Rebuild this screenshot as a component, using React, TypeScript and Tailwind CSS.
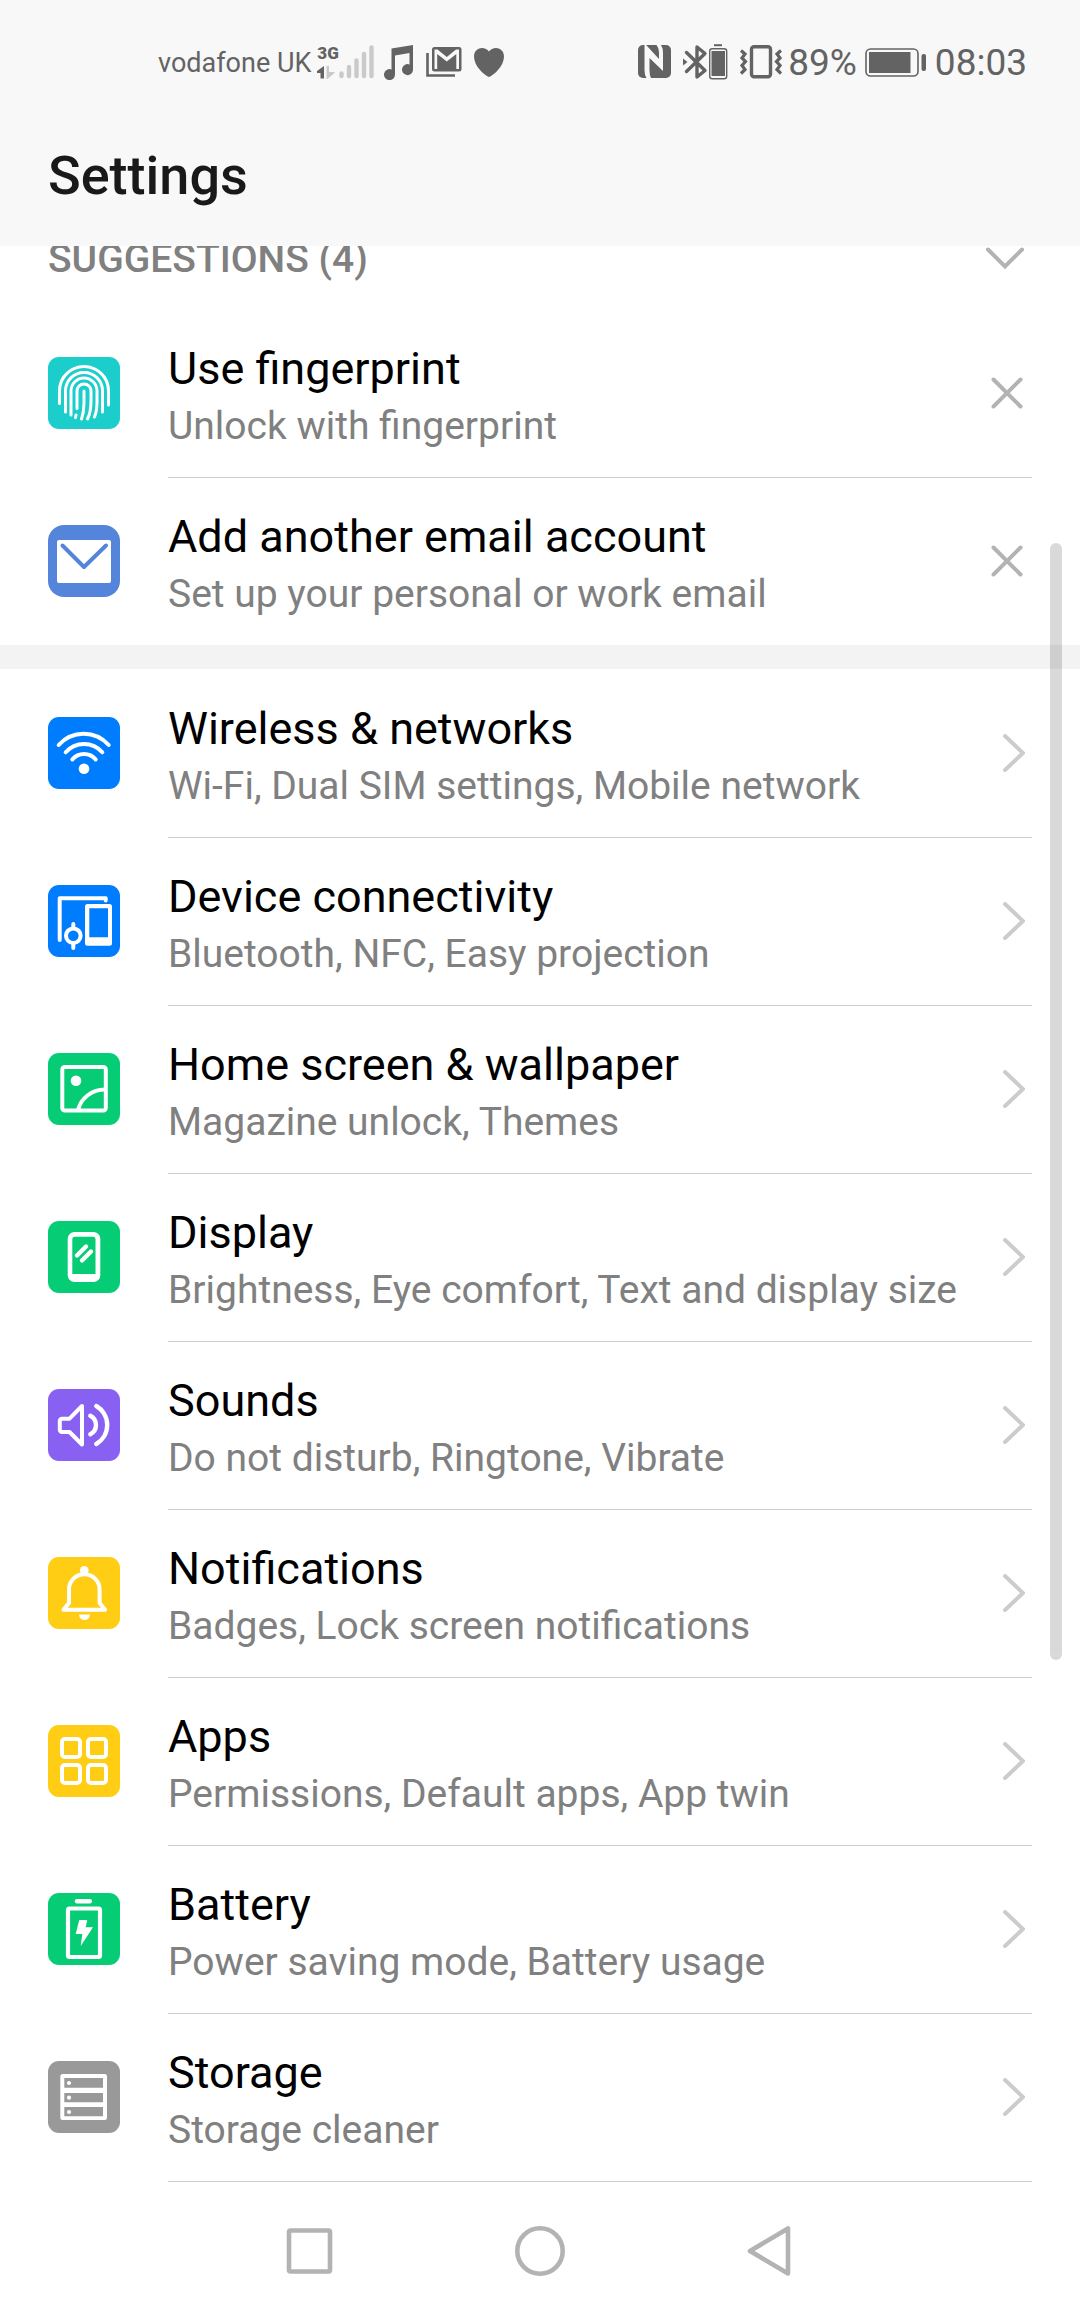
import type { ReactNode } from "react";

type SettingItem = {
  title: string;
  summary: string;
  color: string;
  icon: ReactNode;
};

type SettingRowProps = {
  item: SettingItem;
  first?: boolean;
  dismissible?: boolean;
};

const suggestions: SettingItem[] = [
  {
    title: "Use fingerprint",
    summary: "Unlock with fingerprint",
    color: "bg-[#1bcdcb] rounded-[11px]",
    icon: (
      <g strokeWidth="3">
        <path d="M11.5 46.5V34a24.5 24.5 0 0 1 49 0v14" />
        <path d="M17.5 55V34a18.5 18.5 0 0 1 37 0v21" />
        <path d="M23 58V34a13 13 0 0 1 26 0v11q0 9-2.5 15" />
        <path d="M29 51.5V34a7 7 0 0 1 14 0v10q0 11-3.5 18" />
        <path d="M36 34v12q0 9-2.5 16M28 58l-.5 2.5" />
      </g>
    ),
  },
  {
    title: "Add another email account",
    summary: "Set up your personal or work email",
    color: "bg-[#5585da] rounded-[16px]",
    icon: (
      <>
        <rect x="9" y="15" width="54" height="43" rx="2" fill="#fff" stroke="none" />
        <path d="M14.5 20.5 36 42l22-21.5" stroke="#5585da" strokeWidth="4" />
      </>
    ),
  },
];

const settings: SettingItem[] = [
  {
    title: "Wireless & networks",
    summary: "Wi-Fi, Dual SIM settings, Mobile network",
    color: "bg-[#007dff] rounded-[11px]",
    icon: (
      <>
        <path d="M10.7 28a33.3 33.3 0 0 1 50 0M17.7 35.3a24.3 24.3 0 0 1 36.6 0M24.3 42.5a15 15 0 0 1 23.4 0" />
        <circle cx="36" cy="51.7" r="5.3" fill="#fff" stroke="none" />
      </>
    ),
  },
  {
    title: "Device connectivity",
    summary: "Bluetooth, NFC, Easy projection",
    color: "bg-[#007dff] rounded-[11px]",
    icon: (
      <>
        <path d="M11.7 55V13.3h46v2.2" />
        <path
          d="M39.5 19h22a2.5 2.5 0 0 1 2.5 2.500v36.700a2.5 2.5 0 0 1-2.5 2.500h-22a2.5 2.5 0 0 1-2.5-2.500V21.500a2.5 2.5 0 0 1 2.5-2.500Zm1.800 4.300v29h18.700v-29Z"
          fill="#fff"
          fillRule="evenodd"
          stroke="none"
        />
        <circle cx="25.3" cy="50.7" r="7.3" />
        <path d="M25.3 39v4M25.3 59v4" />
      </>
    ),
  },
  {
    title: "Home screen & wallpaper",
    summary: "Magazine unlock, Themes",
    color: "bg-[#07cc76] rounded-[11px]",
    icon: (
      <>
        <rect x="14.3" y="14" width="43.5" height="43.5" rx="2.5" />
        <circle cx="28" cy="27.7" r="5.3" fill="#fff" stroke="none" />
        <path d="M30 57C33 45 44 36.5 57 36.5" />
      </>
    ),
  },
  {
    title: "Display",
    summary: "Brightness, Eye comfort, Text and display size",
    color: "bg-[#07cc76] rounded-[11px]",
    icon: (
      <>
        <path
          d="M26.5 11h19a6.8 6.8 0 0 1 6.8 6.800v36.400a6.8 6.8 0 0 1-6.8 6.800h-19a6.8 6.8 0 0 1-6.8-6.800V17.800a6.8 6.8 0 0 1 6.8-6.800Zm.3 4.700a2.5 2.5 0 0 0-2.5 2.500V53h23.200V18.200a2.5 2.5 0 0 0-2.5-2.500Z"
          fill="#fff"
          fillRule="evenodd"
          stroke="none"
        />
        <path d="m29 34.5 9-9M34 39.5l9-9" strokeWidth="4.4" />
      </>
    ),
  },
  {
    title: "Sounds",
    summary: "Do not disturb, Ringtone, Vibrate",
    color: "bg-[#8861f3] rounded-[11px]",
    icon: (
      <>
        <path d="M14 29.7h7.5L34 17v38.5L21.5 43H14a2.2 2.2 0 0 1-2.2-2.2v-8.900a2.2 2.2 0 0 1 2.2-2.200Z" />
        <path d="M42.3 26.8a10.3 10.3 0 0 1 0 18.4M48.3 17a22 22 0 0 1 0 38" strokeWidth="4.4" />
      </>
    ),
  },
  {
    title: "Notifications",
    summary: "Badges, Lock screen notifications",
    color: "bg-[#ffcd14] rounded-[11px]",
    icon: (
      <>
        <path d="M15.5 52.8 21 46V32.5a15.3 15.3 0 0 1 30.6 0V46l5.5 6.8Z" />
        <circle cx="36.3" cy="13.3" r="4.3" fill="#fff" stroke="none" />
        <path d="M31 57.5h11a5.5 5.5 0 0 1-11 0Z" fill="#fff" stroke="none" />
      </>
    ),
  },
  {
    title: "Apps",
    summary: "Permissions, Default apps, App twin",
    color: "bg-[#ffcd14] rounded-[11px]",
    icon: (
      <>
        <rect x="14" y="14" width="18" height="18" rx="3" />
        <rect x="40" y="14" width="18" height="18" rx="3" />
        <rect x="14" y="40" width="18" height="18" rx="3" />
        <rect x="40" y="40" width="18" height="18" rx="3" />
      </>
    ),
  },
  {
    title: "Battery",
    summary: "Power saving mode, Battery usage",
    color: "bg-[#07cc76] rounded-[11px]",
    icon: (
      <>
        <rect x="20" y="15.5" width="32" height="48.5" rx="1.5" strokeWidth="4.2" />
        <path d="M29 8.2h12.8" strokeWidth="4.4" />
        <path d="M31.3 27h8l-1.600 7.200h7.300L32.7 53l1.600-12h-6.600Z" fill="#fff" stroke="none" />
      </>
    ),
  },
  {
    title: "Storage",
    summary: "Storage cleaner",
    color: "bg-[#999999] rounded-[11px]",
    icon: (
      <>
        <path
          d="M14.8 13h41.700a2.5 2.5 0 0 1 2.5 2.500v41a2.5 2.5 0 0 1-2.5 2.500H14.8a2.5 2.5 0 0 1-2.5-2.500v-41a2.5 2.5 0 0 1 2.5-2.500Zm1.500 4v9.700H55V17Zm0 15v9.300H55V32Zm0 14v9.300H55V46Z"
          fill="#fff"
          fillRule="evenodd"
          stroke="none"
        />
        <g fill="#fff" stroke="none">
          <circle cx="21" cy="22" r="2.1" />
          <circle cx="21" cy="36.7" r="2.1" />
          <circle cx="21" cy="51" r="2.1" />
        </g>
      </>
    ),
  },
];

function SettingRow({ item, first, dismissible }: SettingRowProps) {
  const border = first ? "border-transparent" : "border-[#cccccc]";

  return (
    <li className="flex items-center gap-12 px-12">
      <svg
        viewBox="0 0 72 72"
        fill="none"
        stroke="#fff"
        strokeWidth="4"
        strokeLinecap="round"
        strokeLinejoin="round"
        aria-hidden="true"
        className={`size-[72px] shrink-0 ${item.color}`}
      >
        {item.icon}
      </svg>

      <div className={`flex flex-1 items-center justify-between border-t pr-[7px] ${border}`}>
        <a href="#" className="block flex-1 pt-[31px] pb-[22px] whitespace-nowrap">
          <p className="text-[45px] leading-[56px] text-black">{item.title}</p>
          <p className="text-[39px] leading-[58px] text-[#808080]">{item.summary}</p>
        </a>

        {dismissible ? (
          <button type="button" aria-label={`Dismiss ${item.title}`}>
            <svg width="34" height="34" viewBox="0 0 34 34" stroke="#b3b3b3" strokeWidth="4" strokeLinecap="round">
              <path d="m2.5 2.5 27 27M29.5 2.5l-27 27" />
            </svg>
          </button>
        ) : (
          <svg width="24" height="40" viewBox="0 0 24 40" fill="none" stroke="#cccccc" strokeWidth="4" strokeLinecap="round">
            <path d="m4 2 18 17L4 36" />
          </svg>
        )}
      </div>
    </li>
  );
}

function StatusBar() {
  return (
    <div className="flex h-[124px] items-center justify-between pr-[53px] pl-[158px] text-[#636363]">
      <div className="flex items-center">
        <span className="pt-[2px] text-[27px] leading-9">vodafone UK</span>

        <div className="ml-[6px] flex h-9 flex-col justify-between">
          <span className="pt-px text-[17px] leading-[17px] font-black">3G</span>
          <svg width="20" height="14" viewBox="0 0 20 14">
            <path d="M7 0v12.500H3.500V7H0V5Z" fill="#636363" />
            <path d="M9.500 0H12v6h5.500v1L10.500 13h-1Z" fill="#cacaca" />
          </svg>
        </div>
        <svg width="36" height="36" viewBox="0 0 36 36" stroke="#cacaca" strokeWidth="4.4" strokeLinecap="round">
          <path d="M2.5 29.5V32M10 23v9M17.5 16.5V32M25 10v22M32.5 3.500V32" />
        </svg>

        <svg width="32" height="36" viewBox="0 0 32 36" className="ml-2" fill="#636363">
          <path d="M8.500 4.500 30 1v24.500a5.500 5.500 0 1 1-3.500-5V9L12 11.500v19a5.500 5.500 0 1 1-3.500-5Z" />
        </svg>
        <svg width="36" height="36" viewBox="0 0 36 36" className="ml-[11px]">
          <path d="M1.500 9v22.500H29" fill="none" stroke="#636363" strokeWidth="2.6" />
          <rect x="6" y="3" width="29.500" height="24.500" rx="2.500" fill="#636363" />
          <path d="M8.500 5.500h3l9.300 7.500L30 5.500h3v19.500h-2.700V10L20.800 17.500 11.200 10v15H8.500Z" fill="#f8f8f8" />
        </svg>
        <svg width="32" height="36" viewBox="0 0 32 36" className="ml-[11px]" fill="#636363">
          <path d="M16 33C11 31 1 22 1 12.500 1 3 12 1.500 16 7.500 20 1.500 31 3 31 12.500 31 22 21 31 16 33Z" />
        </svg>
      </div>

      <div className="flex items-center">
        <svg width="33" height="36" viewBox="0 0 33 36">
          <rect y="1" width="33" height="33" rx="5" fill="#636363" />
          <path
            d="M6.500 1C9 1 8 1 9.500 2.500L21 15V8q0-4-2.500-7H23q2 3 2 8v18L11.500 14v12q0 5 1.500 8H8.500q-2-3-2-8Z"
            fill="#f8f8f8"
          />
        </svg>
        <svg width="45" height="36" viewBox="0 0 45 36" className="ml-3">
          <path
            d="m3.500 8.500 18.500 18-8 6.500V3l8 6.500-18.500 18"
            fill="none"
            stroke="#636363"
            strokeWidth="3.4"
            strokeLinejoin="round"
            strokeLinecap="round"
          />
          <path d="m0 14.500 4.500 3.500L0 21.500Z" fill="#636363" />
          <path d="M31 1.200h8" stroke="#636363" strokeWidth="2" />
          <rect x="26.700" y="4.700" width="17" height="30" rx="2.500" fill="none" stroke="#636363" strokeWidth="1.4" />
          <rect x="28.500" y="7" width="13.500" height="25" fill="#636363" />
        </svg>
        <svg width="42" height="36" viewBox="0 0 42 36" className="ml-3" fill="none" stroke="#636363" strokeWidth="3.4">
          <rect x="11.500" y="2.700" width="19" height="30" rx="2.500" />
          <path
            d="m1 6.500 4 3.500-3 4 3.500 3.500-3.500 4 3 4-4 4M41 6.500 37 10l3 4-3.500 3.500 3.500 4-3 4 4 4"
            strokeWidth="3.2"
          />
        </svg>
        <span className="ml-[6px] pt-[2px] text-[37px] leading-9">89%</span>
        <svg width="62" height="36" viewBox="0 0 62 36" className="ml-2">
          <rect x="1" y="5" width="52" height="27" rx="4.500" fill="none" stroke="#636363" strokeWidth="1.6" />
          <rect x="4" y="8" width="41.500" height="21" fill="#636363" />
          <rect x="56.500" y="10" width="4.500" height="17" rx="2" fill="#636363" />
        </svg>
        <span className="ml-2 pt-[2px] text-[37px] leading-9">08:03</span>
      </div>
    </div>
  );
}

function NavigationBar() {
  return (
    <nav className="grid h-32 grid-cols-3 place-items-center px-[18%] pt-[10px]">
      <button type="button" aria-label="Recent apps">
        <svg width="52" height="52" viewBox="0 0 52 52" fill="none" stroke="#b3b3b3" strokeWidth="4.6">
          <rect x="5" y="5.5" width="41" height="41" rx="1.5" />
        </svg>
      </button>
      <button type="button" aria-label="Home">
        <svg width="52" height="52" viewBox="0 0 52 52" fill="none" stroke="#b3b3b3" strokeWidth="4.6">
          <circle cx="26" cy="26" r="22.7" />
        </svg>
      </button>
      <button type="button" aria-label="Back">
        <svg width="52" height="52" viewBox="0 0 52 52" fill="none" stroke="#b3b3b3" strokeWidth="4.6" strokeLinejoin="round">
          <path d="M44 3.5v45L6 26Z" />
        </svg>
      </button>
    </nav>
  );
}

function App() {
  return (
    <div className="bg-white font-[Roboto,sans-serif]">
      <header className="bg-[#f8f8f8] pb-[18px]">
        <StatusBar />
        <h1 className="px-12 text-[54px] leading-[104px] font-medium text-[#191919]">Settings</h1>
      </header>

      <main className="relative">
        <section>
          <button
            type="button"
            className="flex h-[63px] w-full items-start justify-between overflow-hidden pr-[55px] pl-12 text-[39px] leading-[27px] font-medium text-[#808080]"
          >
            SUGGESTIONS (4)
            <svg width="40" height="24" viewBox="0 0 40 24" fill="none" stroke="#b3b3b3" strokeWidth="4" strokeLinecap="round">
              <path d="m3 3.5 17 17 17-17" />
            </svg>
          </button>
          <ul>
            {suggestions.map((item, index) => (
              <SettingRow key={item.title} item={item} first={index === 0} dismissible />
            ))}
          </ul>
        </section>

        <div className="h-6 bg-[#f3f3f3]" />

        <ul>
          {settings.map((item, index) => (
            <SettingRow key={item.title} item={item} first={index === 0} />
          ))}
        </ul>
        <div className="mr-12 ml-[168px] border-b border-[#cccccc]" />

        {/* scroll thumb */}
        <div className="absolute top-[297px] right-[18px] h-[1117px] w-3 rounded-full bg-black/15" />
      </main>

      <NavigationBar />
    </div>
  );
}

export default App;
